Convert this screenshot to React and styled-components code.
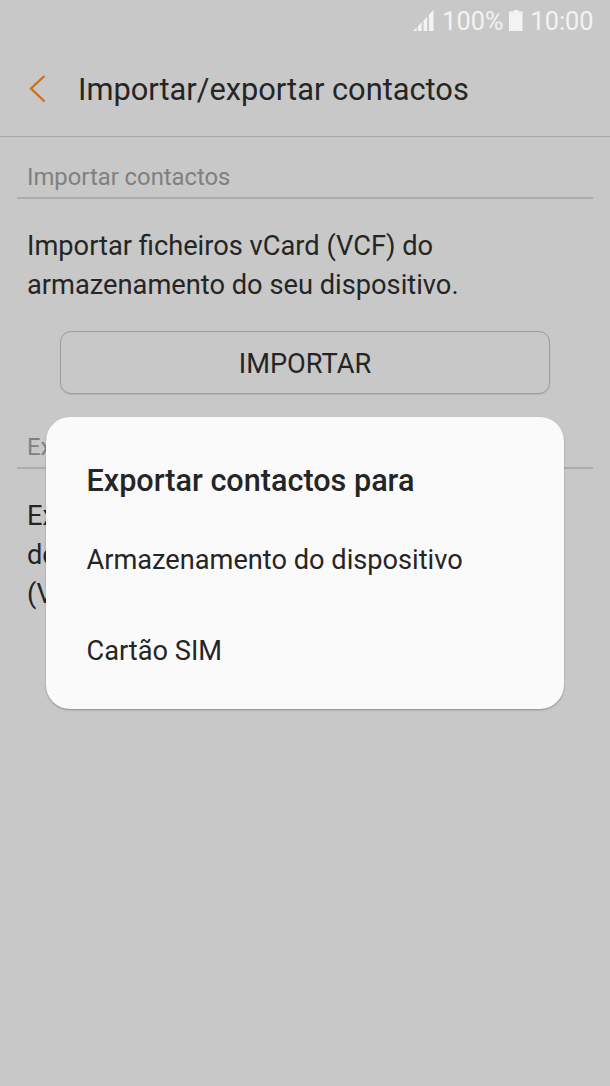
import React from "react";
import styled, { createGlobalStyle } from "styled-components";

const Global = createGlobalStyle`
  * { box-sizing: border-box; }
  html, body { margin: 0; padding: 0; }
  body { background: #c8c8c8; font-family: Roboto, "Liberation Sans", sans-serif; }
`;

const Screen = styled.main`
  position: relative;
  width: 610px;
  height: 1086px;
  overflow: hidden;
  background: #c8c8c8;
  color: #252525;
`;

const StatusBar = styled.div`
  display: flex;
  justify-content: flex-end;
  align-items: flex-start;
  height: 42px;
  padding-right: 16.5px;
  color: #f3f3f3;
  font-size: 25.3px;
  line-height: 43px;
  svg { display: block; margin-top: 10px; }
`;

const Percent = styled.span`
  margin: 0 5px 0 8px;
`;

const Clock = styled.span`
  margin-left: 8px;
`;

const Header = styled.header`
  display: flex;
  align-items: center;
  height: 95px;
  padding-left: 28px;
  border-bottom: 1.5px solid #aaa;
`;

const Title = styled.h1`
  margin: 2px 0 0 31px;
  font-size: 30.8px;
  font-weight: 400;
  line-height: 36px;
  white-space: nowrap;
`;

const SectionHeading = styled.h2`
  height: 62px;
  margin: 0 17px;
  padding: 24px 10px 0;
  border-bottom: 2px solid #acacac;
  color: #808080;
  font-size: 23.8px;
  font-weight: 400;
  line-height: 32px;
`;

const Description = styled.p`
  margin: 0;
  padding: 28px 27px 0;
  font-size: 27.25px;
  line-height: 39px;
  white-space: pre-line;
`;

const ImportButton = styled.button`
  display: block;
  width: 490px;
  height: 63px;
  margin: 26px 60px 13px;
  padding: 2px 0 0;
  border: 1px solid #9d9d9d;
  border-radius: 11px;
  background: transparent;
  box-shadow: 0 1px 1px rgba(0, 0, 0, 0.1);
  color: inherit;
  font: 400 27.2px Roboto, sans-serif;
`;

const Dialog = styled.section`
  position: absolute;
  top: 417px;
  left: 46px;
  width: 518px;
  height: 292px;
  padding: 43px 40px 0 40.5px;
  border-radius: 24px;
  background: #fafafa;
  box-shadow: 0 1px 2px rgba(0, 0, 0, 0.3);
`;

const DialogTitle = styled.h2`
  margin: 0 0 19px;
  font-size: 30.6px;
  font-weight: 500;
  line-height: 42px;
`;

const Option = styled.div`
  height: 91px;
  padding-top: 19px;
  font-size: 27.2px;
  line-height: 40px;
`;

export default function App() {
  return (
    <>
      <Global />
      <Screen>
        <StatusBar>
          <svg width="21" height="21" viewBox="0 0 21 21" fill="currentColor">
            <path d="M0 21l3.700-3.700V21zM5 21v-5l3.700-3.700V21zM10.500 21V10.500l3.700-3.700V21zM16 21V4.500L20.500 0v21z" />
          </svg>
          <Percent>100%</Percent>
          <svg width="14" height="21" viewBox="0 0 14 21" fill="currentColor">
            <path d="M5 0h4.500v1.500H13.500V21H0V1.500h5z" />
          </svg>
          <Clock>10:00</Clock>
        </StatusBar>
        <Header>
          <svg width="19" height="28" viewBox="0 0 19 28" fill="none" stroke="#c87020" strokeWidth="2.3">
            <path d="M16.500 1L3 13.500l13.500 13" />
          </svg>
          <Title>Importar/exportar contactos</Title>
        </Header>
        <SectionHeading>Importar contactos</SectionHeading>
        <Description>{"Importar ficheiros vCard (VCF) do\narmazenamento do seu dispositivo."}</Description>
        <ImportButton>IMPORTAR</ImportButton>
        <SectionHeading>Exportar contactos</SectionHeading>
        <Description>{"Exportar contactos para\ndo dispositivo como ficheiros\n(VCF)."}</Description>
        <Dialog role="dialog">
          <DialogTitle>Exportar contactos para</DialogTitle>
          <Option>Armazenamento do dispositivo</Option>
          <Option>Cartão SIM</Option>
        </Dialog>
      </Screen>
    </>
  );
}
